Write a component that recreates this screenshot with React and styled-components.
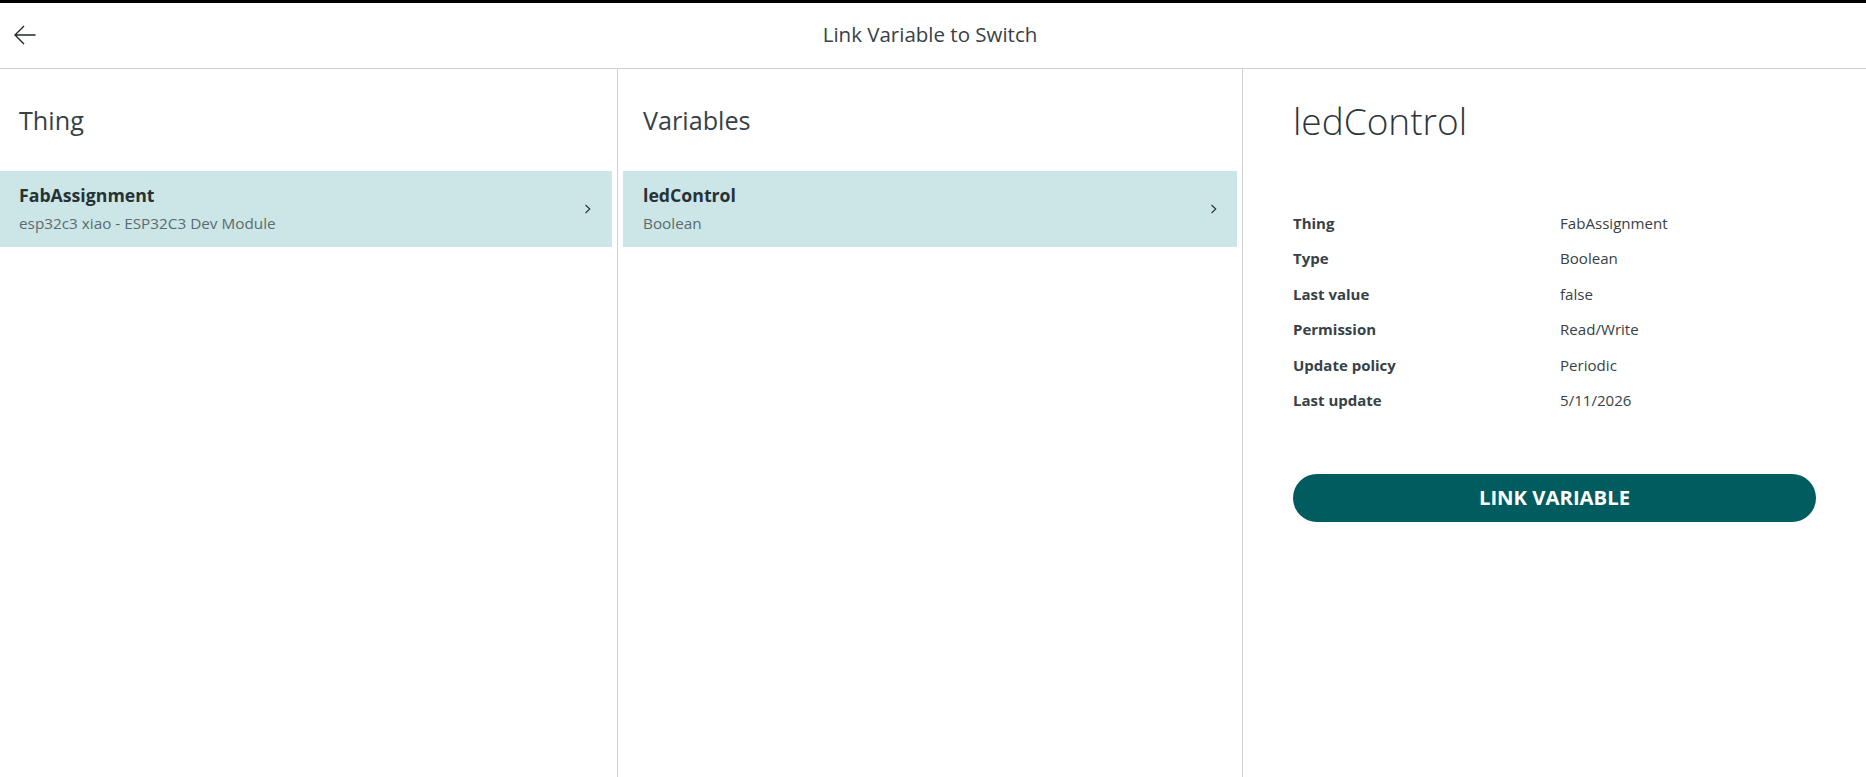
import React from "react";
import styled, { createGlobalStyle } from "styled-components";

const Global = createGlobalStyle`
  html, body { margin: 0; padding: 0; background: #fff; }
  body { font-family: "Open Sans", "Noto Sans", sans-serif; color: #2c353a; overflow: hidden; }
  * { box-sizing: border-box; }
`;

const Page = styled.div`
  display: flex;
  flex-direction: column;
  height: 777px;
  border-top: 3px solid #000;
`;

const Header = styled.header`
  position: relative;
  flex: 0 0 66px;
  display: flex;
  align-items: center;
  justify-content: center;
  border-bottom: 1px solid #cfd2d3;
`;

const BackButton = styled.button`
  position: absolute;
  left: 13px;
  top: 21px;
  width: 24px;
  height: 24px;
  padding: 0;
  border: 0;
  background: none;
  display: flex;
`;

const PageTitle = styled.h1`
  margin: 0 0 4px -6px;
  font-size: 20.5px;
  font-weight: 400;
  line-height: 28px;
  color: #374146;
`;

const Columns = styled.div`
  flex: 1;
  display: grid;
  grid-template-columns: 618px 625px 1fr;
  min-height: 0;
`;

const ListColumn = styled.section`
  padding: 0 ${(p) => p.$right}px 0 ${(p) => p.$left}px;
  border-right: 1px solid #cfd2d3;
`;

const ColumnTitle = styled.h2`
  margin: 0;
  height: 102px;
  padding: 33px 0 0 ${(p) => p.$indent}px;
  font-size: 25.2px;
  line-height: 36px;
  font-weight: 400;
  color: #374146;
`;

const ListRow = styled.div`
  height: 76px;
  display: flex;
  align-items: center;
  justify-content: space-between;
  padding: 0 ${(p) => p.$pad}px 0 ${(p) => p.$indent}px;
  background: #cce5e6;
`;

const RowText = styled.div`
  display: flex;
  flex-direction: column;
`;

const RowName = styled.span`
  font-size: 17.7px;
  line-height: 24px;
  font-weight: 700;
  color: #263236;
`;

const RowSub = styled.span`
  font-size: 15.3px;
  line-height: 24px;
  margin-top: 4px;
  color: #5a6c70;
`;

const DetailColumn = styled.section`
  padding: 0 50px;
`;

const DetailTitle = styled.h2`
  margin: 0;
  padding-top: 29px;
  height: 136px;
  font-size: 37px;
  line-height: 46px;
  font-weight: 300;
  color: #2c353a;
`;

const DetailGrid = styled.dl`
  margin: 0;
  display: grid;
  grid-template-columns: 267px 1fr;
  grid-auto-rows: 35.5px;
  align-items: center;
`;

const DetailKey = styled.dt`
  font-size: 15px;
  font-weight: 700;
  color: #374146;
`;

const DetailValue = styled.dd`
  margin: 0;
  font-size: 15.1px;
  color: #374146;
`;

const LinkButton = styled.button`
  display: block;
  width: 100%;
  height: 48px;
  margin-top: 56px;
  padding: 0 0 2px;
  border: 0;
  border-radius: 24px;
  background: #005c5f;
  color: #fff;
  font-family: inherit;
  font-size: 20.3px;
  font-weight: 700;
`;

const Chevron = () => (
  <svg width="10" height="12" viewBox="0 0 10 12" fill="none" stroke="#263236" strokeWidth="1.1">
    <path d="M2.5 2 L6.8 6 L2.5 10" />
  </svg>
);

const details = [
  ["Thing", "FabAssignment"],
  ["Type", "Boolean"],
  ["Last value", "false"],
  ["Permission", "Read/Write"],
  ["Update policy", "Periodic"],
  ["Last update", "5/11/2026"],
];

export default function App() {
  return (
    <>
      <Global />
      <Page>
        <Header>
          <BackButton aria-label="Back">
            <svg width="24" height="24" viewBox="0 0 24 24" fill="none" stroke="#1f2a2e" strokeWidth="1.4">
              <path d="M22.5 11 H2.5 M11 2 L2 11 L11 20" />
            </svg>
          </BackButton>
          <PageTitle>Link Variable to Switch</PageTitle>
        </Header>
        <Columns>
          <ListColumn $left={0} $right={5}>
            <ColumnTitle $indent={19}>Thing</ColumnTitle>
            <ListRow $indent={19} $pad={19}>
              <RowText>
                <RowName>FabAssignment</RowName>
                <RowSub>esp32c3 xiao - ESP32C3 Dev Module</RowSub>
              </RowText>
              <Chevron />
            </ListRow>
          </ListColumn>
          <ListColumn $left={5} $right={5}>
            <ColumnTitle $indent={20}>Variables</ColumnTitle>
            <ListRow $indent={20} $pad={18}>
              <RowText>
                <RowName>ledControl</RowName>
                <RowSub>Boolean</RowSub>
              </RowText>
              <Chevron />
            </ListRow>
          </ListColumn>
          <DetailColumn>
            <DetailTitle>ledControl</DetailTitle>
            <DetailGrid>
              {details.map(([k, v]) => (
                <React.Fragment key={k}>
                  <DetailKey>{k}</DetailKey>
                  <DetailValue>{v}</DetailValue>
                </React.Fragment>
              ))}
            </DetailGrid>
            <LinkButton>LINK VARIABLE</LinkButton>
          </DetailColumn>
        </Columns>
      </Page>
    </>
  );
}
